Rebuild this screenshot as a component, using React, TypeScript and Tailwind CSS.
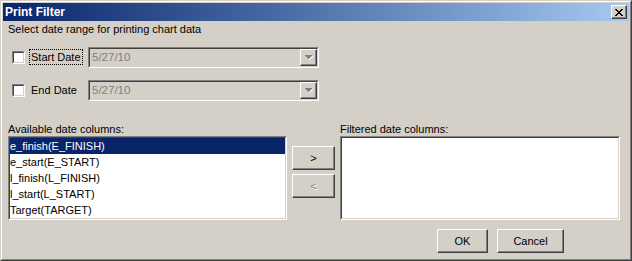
import React from "react";

const sunkenOuter =
  "border border-t-[#808080] border-l-[#808080] border-r-white border-b-white";
const sunkenInner =
  "border border-t-[#404040] border-l-[#404040] border-r-[#d4d0c8] border-b-[#d4d0c8]";
const raised =
  "border border-t-white border-l-white border-r-[#404040] border-b-[#404040] shadow-[inset_-1px_-1px_0_#808080]";

const columns = [
  "e_finish(E_FINISH)",
  "e_start(E_START)",
  "l_finish(L_FINISH)",
  "l_start(L_START)",
  "Target(TARGET)",
];

const CloseGlyph = () => (
  <svg width="8" height="7" viewBox="0 0 8 7" shapeRendering="crispEdges">
    {[
      [0, 0], [1, 0], [6, 0], [7, 0],
      [1, 1], [2, 1], [5, 1], [6, 1],
      [2, 2], [3, 2], [4, 2], [5, 2],
      [3, 3], [4, 3],
      [2, 4], [3, 4], [4, 4], [5, 4],
      [1, 5], [2, 5], [5, 5], [6, 5],
      [0, 6], [1, 6], [6, 6], [7, 6],
    ].map(([x, y]) => (
      <rect key={`${x}-${y}`} x={x} y={y} width="1" height="1" fill="#000" />
    ))}
  </svg>
);

const DisabledArrow = () => (
  <svg width="8" height="5" viewBox="0 0 8 5" shapeRendering="crispEdges">
    <rect x="7" y="1" width="1" height="1" fill="#fff" />
    <rect x="4" y="4" width="1" height="1" fill="#fff" />
    <rect x="5" y="3" width="1" height="1" fill="#fff" />
    <rect x="6" y="2" width="1" height="1" fill="#fff" />
    <rect x="0" y="0" width="7" height="1" fill="#808080" />
    <rect x="1" y="1" width="5" height="1" fill="#808080" />
    <rect x="2" y="2" width="3" height="1" fill="#808080" />
    <rect x="3" y="3" width="1" height="1" fill="#808080" />
  </svg>
);

const Checkbox = () => (
  <div className={`w-[13px] h-[13px] ${sunkenOuter}`}>
    <div className={`h-full w-full bg-white ${sunkenInner}`} />
  </div>
);

const DateCombo = () => (
  <div className={`w-[231px] h-[21px] ${sunkenOuter}`}>
    <div className={`h-full w-full flex items-center bg-[#d4d0c8] ${sunkenInner}`}>
      <span className="flex-1 pl-[2px] text-[#808080] text-[11.5px]">5/27/10</span>
      <div className={`w-[17px] h-full flex items-center justify-center bg-[#d4d0c8] ${raised}`}>
        <DisabledArrow />
      </div>
    </div>
  </div>
);

const DateRow = ({ label, focused }: { label: string; focused?: boolean }) => (
  <div className="flex items-center h-[21px]">
    <div className="ml-[4px]">
      <Checkbox />
    </div>
    <div className="ml-[4px] w-[59px]">
      <span
        className={`inline-block leading-[14px] px-px ${
          focused ? "border border-dotted border-black" : "border border-transparent"
        }`}
      >
        {label}
      </span>
    </div>
    <DateCombo />
  </div>
);

const ListBox = ({
  width,
  items,
}: {
  width: string;
  items: string[];
}) => (
  <div className={`${width} h-[84px] ${sunkenOuter}`}>
    <div className={`h-full w-full bg-white ${sunkenInner}`}>
      {items.map((item, i) => (
        <div
          key={item}
          className={`h-[16px] leading-[16px] ${
            i === 0 ? "bg-[#0a246a] text-white" : "text-black"
          }`}
        >
          {item}
        </div>
      ))}
    </div>
  </div>
);

const PushButton = ({
  children,
  className,
  disabled,
}: {
  children: React.ReactNode;
  className: string;
  disabled?: boolean;
}) => (
  <button
    type="button"
    className={`${className} flex items-center justify-center bg-[#d4d0c8] ${raised} ${
      disabled ? "text-[#808080] [text-shadow:1px_1px_0_#fff]" : "text-black"
    }`}
  >
    {children}
  </button>
);

export default function App() {
  return (
    <div className="w-[632px] h-[261px] bg-[#d4d0c8] border border-t-[#d4d0c8] border-l-[#d4d0c8] border-r-[#404040] border-b-[#404040] font-['Liberation_Sans',Arial,sans-serif] text-[11px] text-black">
      <div className="h-full border border-t-white border-l-white border-r-[#808080] border-b-[#808080] p-px flex flex-col">
        {/* Title bar */}
        <div className="h-[18px] flex items-center justify-between bg-linear-to-r from-[#0a246a] to-[#a6caf0] pl-[2px] pr-[2px]">
          <span className="text-white font-bold text-[12px]">Print Filter</span>
          <div className={`w-[16px] h-[14px] flex items-center justify-center bg-[#d4d0c8] ${raised}`}>
            <CloseGlyph />
          </div>
        </div>

        <div className="flex flex-col pl-[5px]">
          <div className="mt-[2px] leading-[13px]">
            Select date range for printing chart data
          </div>

          <div className="mt-[11px]">
            <DateRow label="Start Date" focused />
          </div>
          <div className="mt-[12px]">
            <DateRow label="End Date" />
          </div>

          <div className="mt-[22px] flex">
            <div className="flex flex-col">
              <div className="leading-[13px]">Available date columns:</div>
              <ListBox width="w-[279px]" items={columns} />
            </div>

            <div className="ml-[5px] pt-[23px] flex flex-col gap-[4px]">
              <PushButton className="w-[43px] h-[24px]">&gt;</PushButton>
              <PushButton className="w-[43px] h-[24px]" disabled>
                &lt;
              </PushButton>
            </div>

            <div className="ml-[5px] flex flex-col">
              <div className="leading-[13px]">Filtered date columns:</div>
              <ListBox width="w-[280px]" items={[]} />
            </div>
          </div>

          <div className="mt-[9px] flex pl-[429px] gap-[9px]">
            <PushButton className="w-[51px] h-[24px]">OK</PushButton>
            <PushButton className="w-[67px] h-[24px]">Cancel</PushButton>
          </div>
        </div>
      </div>
    </div>
  );
}
